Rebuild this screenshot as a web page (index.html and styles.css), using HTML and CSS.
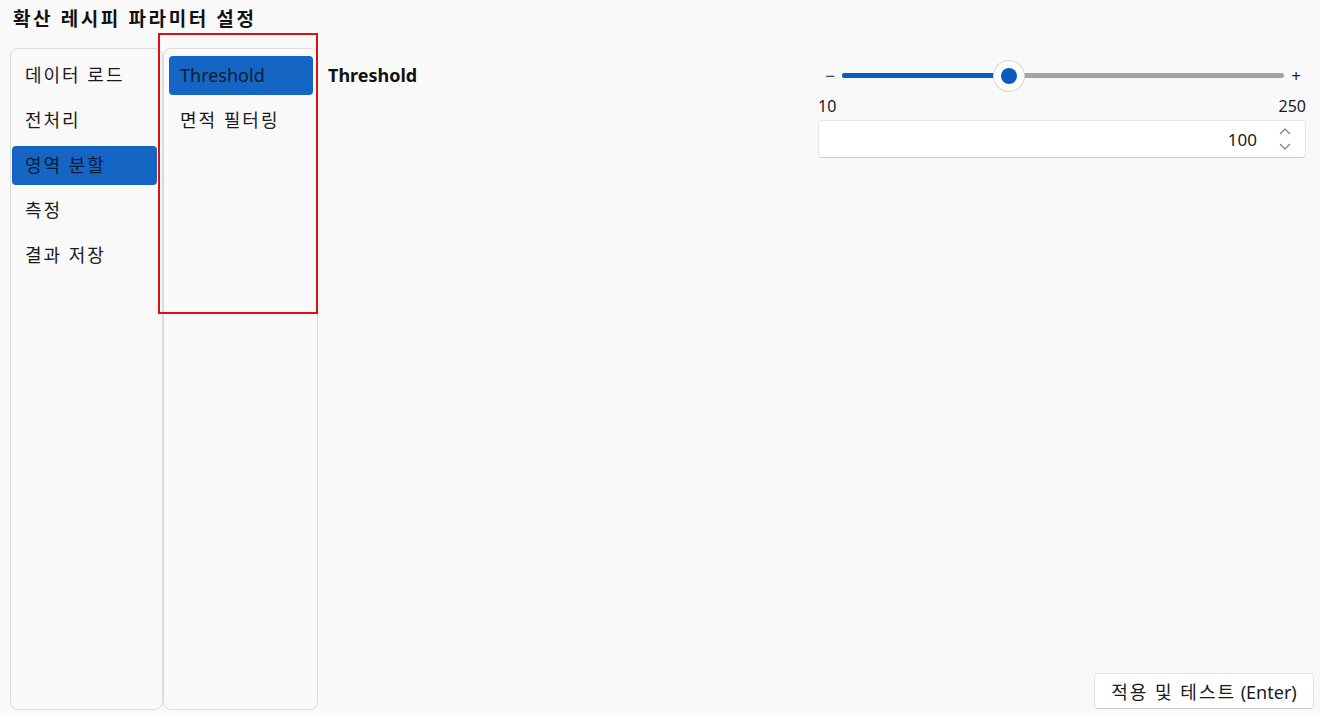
FILE: index.html
```html
<!DOCTYPE html>
<html lang="ko">
<head>
<meta charset="utf-8">
<link rel="stylesheet" href="styles.css">
</head>
<body>
<div class="window">
  <div class="title">확산 레시피 파라미터 설정</div>
  <div class="main">
    <div class="panel cat">
      <div class="item ko">데이터 로드</div>
      <div class="item ko">전처리</div>
      <div class="item ko selected">영역 분할</div>
      <div class="item ko">측정</div>
      <div class="item ko">결과 저장</div>
    </div>
    <div class="panel sub">
      <div class="item selected">Threshold</div>
      <div class="item ko">면적 필터링</div>
    </div>
    <div class="content">
      <div class="param-row">
        <div class="param-label">Threshold</div>
        <div class="control">
          <div class="slider-row">
            <span class="step">−</span>
            <div class="track">
              <div class="fill" style="width: 37.7%"></div>
              <div class="thumb"><div class="dot"></div></div>
            </div>
            <span class="step">+</span>
          </div>
          <div class="range"><span>10</span><span>250</span></div>
          <div class="spin">
            <span class="value">100</span>
            <svg class="arrows" width="14" height="26" viewBox="0 0 14 26">
              <path d="M2 8 L7 3 L12 8" fill="none" stroke="#777" stroke-width="1.1"/>
              <path d="M2 18 L7 23 L12 18" fill="none" stroke="#777" stroke-width="1.1"/>
            </svg>
          </div>
        </div>
      </div>
      <div class="footer">
        <button class="apply"><span class="ko">적용 및 테스트</span> (Enter)</button>
      </div>
    </div>
  </div>
  <div class="highlight"></div>
</div>
</body>
</html>
```

FILE: styles.css
```css
html, body {
  margin: 0;
  padding: 0;
  background: #f9f9f9;
}
body {
  font-family: "Noto Sans", "Noto Sans CJK KR", sans-serif;
  color: #1a1a1a;
}
.window {
  position: relative;
  width: 1320px;
  height: 715px;
  display: flex;
  flex-direction: column;
  box-sizing: border-box;
  padding: 0 6px 5px 10px;
}
.title {
  height: 48px;
  box-sizing: border-box;
  padding: 5px 0 0 3px;
  font-size: 19px;
  font-weight: 700;
  letter-spacing: 2.6px;
  line-height: 28px;
  color: #111;
  white-space: nowrap;
}
.main {
  flex: 1;
  display: flex;
  min-height: 0;
}
.panel {
  box-sizing: border-box;
  border: 1px solid #dcdcdc;
  border-radius: 8px;
  background: #f9f9f9;
  display: flex;
  flex-direction: column;
  gap: 6px;
  padding-top: 7px;
}
.cat {
  width: 153px;
  padding-left: 1px;
  padding-right: 5px;
}
.sub {
  width: 155px;
  padding-left: 5px;
  padding-right: 4px;
}
.item {
  height: 39px;
  line-height: 39px;
  font-size: 18px;
  border-radius: 4px;
  color: #1a1a1a;
  white-space: nowrap;
}
.ko { letter-spacing: 2px; }
.cat .item { padding-left: 13px; }
.sub .item { padding-left: 11px; }
.item.selected {
  background: #1565c4;
  color: #0d1b2e;
}
.content {
  flex: 1;
  display: flex;
  flex-direction: column;
  padding-left: 10px;
}
.param-row {
  display: flex;
  justify-content: space-between;
  padding-top: 8px;
}
.param-label {
  font-size: 18px;
  font-weight: 700;
  line-height: 39px;
  color: #111;
}
.control {
  width: 488px;
  margin-right: 8px;
  display: flex;
  flex-direction: column;
}
.slider-row {
  height: 39px;
  display: flex;
  align-items: center;
  gap: 6px;
  padding: 0 4px 0 6px;
}
.step {
  font-size: 17px;
  color: #222;
  width: 12px;
  text-align: center;
  line-height: 20px;
}
.track {
  position: relative;
  flex: 1;
  height: 5px;
  border-radius: 3px;
  background: #a3a3a3;
}
.fill {
  height: 100%;
  border-radius: 3px;
  background: #0b5cbd;
}
.thumb {
  position: absolute;
  left: 37.7%;
  top: 50%;
  width: 30px;
  height: 30px;
  margin: -15px 0 0 -15px;
  border-radius: 50%;
  background: #fff;
  box-shadow: 0 0 0 1px #d6d6d6;
  display: flex;
  align-items: center;
  justify-content: center;
}
.dot {
  width: 16px;
  height: 16px;
  border-radius: 50%;
  background: #0b5cbd;
}
.range {
  display: flex;
  justify-content: space-between;
  font-size: 16px;
  line-height: 22px;
  margin-top: 0;
  color: #1a1a1a;
}
.spin {
  margin-top: 3px;
  height: 38px;
  box-sizing: border-box;
  background: #fff;
  border: 1px solid #e6e6e6;
  border-bottom-color: #c8c8c8;
  border-radius: 4px;
  display: flex;
  align-items: center;
  justify-content: flex-end;
  padding-right: 13px;
  gap: 21px;
}
.value {
  font-size: 17px;
  color: #1a1a1a;
}
.footer {
  margin-top: auto;
  display: flex;
  justify-content: flex-end;
}
.apply {
  font-family: "Noto Sans", "Noto Sans CJK KR", sans-serif;
  font-size: 18px;
  height: 36px;
  width: 220px;
  background: #fff;
  border: 1px solid #e3e3e3;
  border-bottom-color: #c9c9c9;
  border-radius: 4px;
  color: #1a1a1a;
  padding: 0;
  margin-bottom: 1px;
  white-space: nowrap;
}
.highlight {
  position: absolute;
  left: 158px;
  top: 33px;
  width: 160px;
  height: 281px;
  box-sizing: border-box;
  border: 2px solid #dd1111;
  pointer-events: none;
}
```
